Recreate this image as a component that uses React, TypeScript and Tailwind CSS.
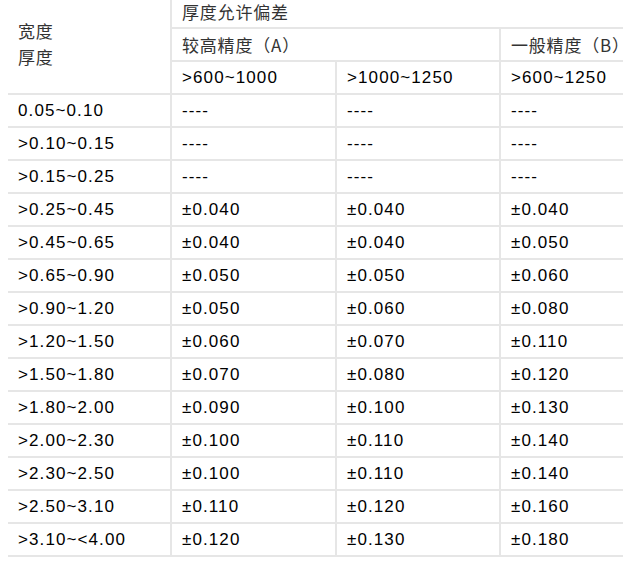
import React from "react";

const rows: [string, string, string, string][] = [
  ["0.05~0.10", "----", "----", "----"],
  [">0.10~0.15", "----", "----", "----"],
  [">0.15~0.25", "----", "----", "----"],
  [">0.25~0.45", "±0.040", "±0.040", "±0.040"],
  [">0.45~0.65", "±0.040", "±0.040", "±0.050"],
  [">0.65~0.90", "±0.050", "±0.050", "±0.060"],
  [">0.90~1.20", "±0.050", "±0.060", "±0.080"],
  [">1.20~1.50", "±0.060", "±0.070", "±0.110"],
  [">1.50~1.80", "±0.070", "±0.080", "±0.120"],
  [">1.80~2.00", "±0.090", "±0.100", "±0.130"],
  [">2.00~2.30", "±0.100", "±0.110", "±0.140"],
  [">2.30~2.50", "±0.100", "±0.110", "±0.140"],
  [">2.50~3.10", "±0.110", "±0.120", "±0.160"],
  [">3.10~<4.00", "±0.120", "±0.130", "±0.180"],
];

const num = "text-[17px] leading-[20px] tracking-[1.1px] text-[#000] font-['Liberation_Sans',Arial,sans-serif]";
const zh = "text-[17px] leading-[20px] tracking-[0.8px] text-[#333] font-['Noto_Sans_CJK_SC','Liberation_Sans',sans-serif]";

export default function App() {
  return (
    <div className="w-[623px] h-[570px] overflow-hidden bg-white">
      <div className="pl-[8px]">
        <table className="border-collapse table-fixed w-[660px]">
          <colgroup>
            <col className="w-[163px]" />
            <col className="w-[165px]" />
            <col className="w-[164px]" />
            <col className="w-[168px]" />
          </colgroup>
          <tbody>
            <tr className="h-[28px]">
              <td rowSpan={3} className={`border-r-2 border-b-2 border-[#e6e6e6] pl-[10px] align-middle pb-[6px] ${zh}`}>
                <div className="leading-[26px]">宽度<br />厚度</div>
              </td>
              <td colSpan={3} className={`border-b-2 border-[#e6e6e6] pl-[10px] pb-[3px] ${zh}`}>
                厚度允许偏差
              </td>
            </tr>
            <tr className="h-[33px]">
              <td colSpan={2} className={`border-r-2 border-b-2 border-[#e6e6e6] pl-[10px] ${zh}`}>
                较高精度（A）
              </td>
              <td className={`border-b-2 border-[#e6e6e6] pl-[10px] whitespace-nowrap overflow-hidden ${zh}`}>
                一般精度（B）
              </td>
            </tr>
            <tr className="h-[33px]">
              <td className={`border-r-2 border-b-2 border-[#e6e6e6] pl-[10px] ${num}`}>&gt;600~1000</td>
              <td className={`border-r-2 border-b-2 border-[#e6e6e6] pl-[10px] ${num}`}>&gt;1000~1250</td>
              <td className={`border-b-2 border-[#e6e6e6] pl-[10px] ${num}`}>&gt;600~1250</td>
            </tr>
            {rows.map((r, i) => (
              <tr key={i} className="h-[33px]">
                <td className={`border-r-2 border-b-2 border-[#e6e6e6] pl-[10px] ${num}`}>{r[0]}</td>
                <td className={`border-r-2 border-b-2 border-[#e6e6e6] pl-[10px] ${num}`}>{r[1]}</td>
                <td className={`border-r-2 border-b-2 border-[#e6e6e6] pl-[10px] ${num}`}>{r[2]}</td>
                <td className={`border-b-2 border-[#e6e6e6] pl-[10px] ${num}`}>{r[3]}</td>
              </tr>
            ))}
          </tbody>
        </table>
      </div>
    </div>
  );
}
